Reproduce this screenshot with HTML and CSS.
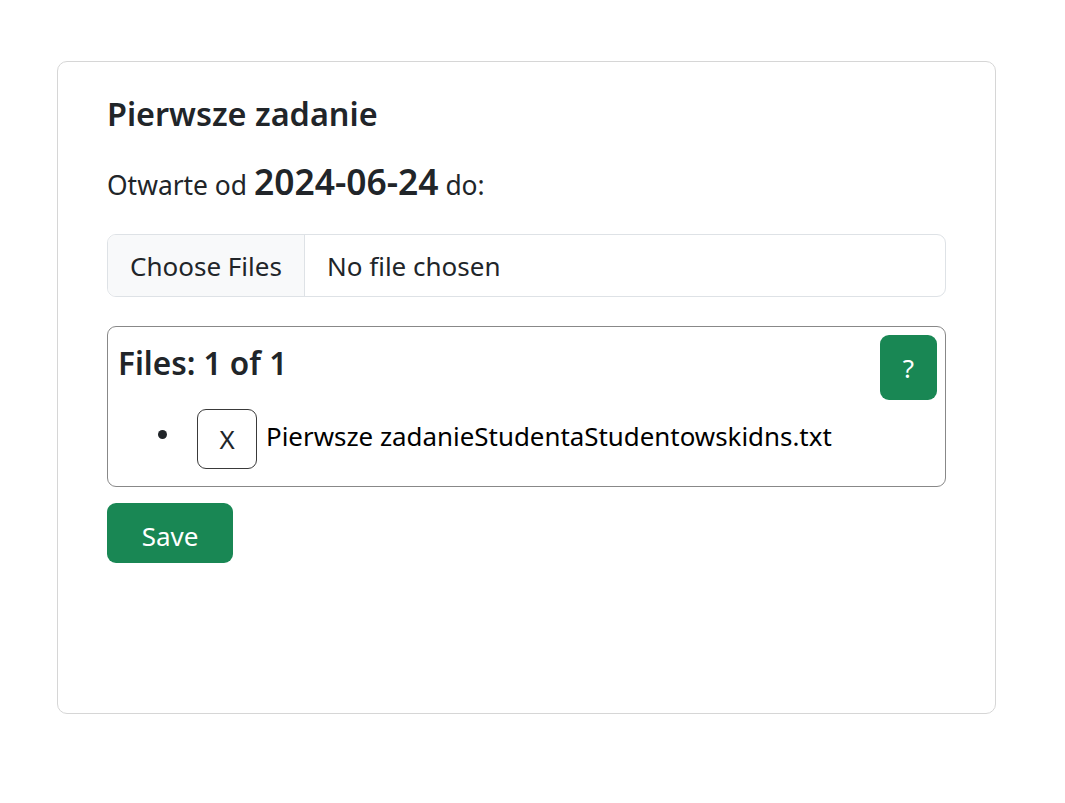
FILE: index.html
```html
<!DOCTYPE html>
<html lang="pl">
<head>
<meta charset="utf-8">
<title>Pierwsze zadanie</title>
<link rel="stylesheet" href="styles.css">
</head>
<body>
<div class="card">
  <h4 class="title">Pierwsze zadanie</h4>
  <p class="open">Otwarte od <strong class="date">2024-06-24</strong> do:</p>
  <div class="file-input">
    <span class="file-btn">Choose Files</span>
    <span class="file-name">No file chosen</span>
  </div>
  <div class="files-box">
    <div class="files-head">
      <h4 class="files-title">Files: 1 of 1</h4>
      <button class="help" type="button">?</button>
    </div>
    <ul class="file-list">
      <li class="file-item">
        <span class="bullet"></span>
        <button class="remove" type="button">X</button>
        <span class="file-text">Pierwsze zadanieStudentaStudentowskidns.txt</span>
      </li>
    </ul>
  </div>
  <button class="save" type="button">Save</button>
</div>
</body>
</html>
```
FILE: styles.css
```css
* { box-sizing: border-box; }

body {
  margin: 0;
  background: #fff;
  font-family: "Noto Sans", "Open Sans", sans-serif;
  font-size: 26px;
  color: #212529;
}

.card {
  margin: 61px 0 0 57px;
  width: 939px;
  height: 653px;
  border: 1px solid #d6d6d6;
  border-radius: 10px;
  padding: 31px 49px 0 49px;
}

.title {
  margin: 0;
  font-size: 32.4px;
  line-height: 40px;
  font-weight: 600;
}

.open {
  margin: 31px 0 29px;
  font-size: 26.4px;
  line-height: 40px;
}

.date {
  font-size: 35.4px;
  line-height: 34px;
  font-weight: 600;
}

.file-input {
  display: flex;
  height: 63px;
  border: 1px solid #dee2e6;
  border-radius: 9px;
  overflow: hidden;
}

.file-btn {
  display: flex;
  align-items: center;
  width: 197px;
  padding-left: 22px;
  background: #f8f9fa;
  border-right: 1px solid #dee2e6;
}

.file-name {
  display: flex;
  align-items: center;
  padding-left: 22px;
}

.files-box {
  margin-top: 29px;
  height: 161px;
  border: 1px solid #888;
  border-radius: 9px;
  padding: 8px 8px 8px 10px;
}

.files-head {
  display: flex;
  justify-content: space-between;
  align-items: flex-start;
}

.files-title {
  margin: 8px 0 0;
  font-size: 31.5px;
  line-height: 40px;
  font-weight: 600;
}

.help {
  width: 57px;
  height: 65px;
  border: none;
  border-radius: 9px;
  background: #198754;
  color: #fff;
  font-family: inherit;
  font-size: 26px;
  padding: 0;
}

.file-list {
  list-style: none;
  margin: 9px 0 0;
  padding: 0;
}

.file-item {
  display: flex;
  align-items: center;
  height: 60px;
}

.bullet {
  width: 9px;
  height: 9px;
  border-radius: 50%;
  background: #212529;
  margin: 0 30px 10px 40px;
}

.remove {
  width: 60px;
  height: 60px;
  border: 1px solid #3a3a3a;
  border-radius: 9px;
  background: #fff;
  color: #212529;
  font-family: inherit;
  font-size: 26px;
  padding: 0;
}

.file-text {
  margin: 0 0 6px 9px;
  font-size: 25.9px;
  color: #000;
}

.save {
  display: block;
  margin-top: 16px;
  width: 126px;
  height: 60px;
  border: none;
  border-radius: 9px;
  background: #198754;
  color: #fff;
  font-family: inherit;
  font-size: 26px;
  padding: 5px 0 0;
}
```
